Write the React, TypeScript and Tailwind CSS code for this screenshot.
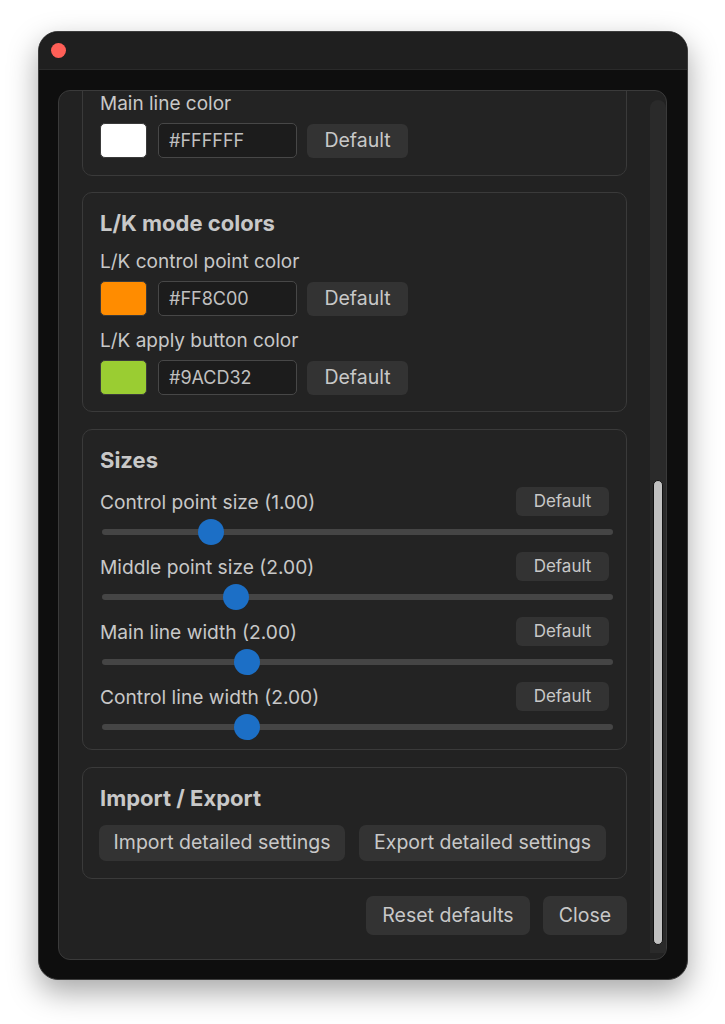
import React from "react";

const TXT = "text-[#c8c8c8]";

function ColorRow({ label, swatch, hex }: { label: string; swatch: string; hex: string }) {
  return (
    <div className="flex flex-col">
      <div className={`text-[19px] leading-[22px] ${TXT}`}>{label}</div>
      <div className="mt-[8px] flex items-center h-[35px]">
        <div className={`w-[47px] h-[35px] rounded-[5px] border border-[#3a3a3a] ${swatch}`} />
        <div className="ml-[11px] w-[139px] h-[35px] rounded-[5px] border border-[#474747] bg-[#1c1c1c] flex items-center px-[10px] text-[18px] text-[#c0c0c0]">
          {hex}
        </div>
        <button className={`ml-[10px] w-[101px] h-[34px] rounded-[6px] bg-[#333333] text-[19.5px] ${TXT}`}>Default</button>
      </div>
    </div>
  );
}

function SizeRow({ label, pos }: { label: string; pos: number }) {
  return (
    <div className="flex flex-col">
      <div className="flex items-center justify-between h-[29px]">
        <span className={`text-[19.2px] leading-[22px] ${TXT}`}>{label}</span>
        <button className={`w-[93px] h-[29px] rounded-[6px] bg-[#333333] text-[17px] ${TXT}`}>Default</button>
      </div>
      <div className="relative mt-[3px] h-[26px] ml-[2px] mr-[-4px]">
        <div className="absolute left-0 right-0 top-[10px] h-[6px] rounded-full bg-[#454545]" />
        <div className="absolute top-0 w-[26px] h-[26px] rounded-full bg-[#1c6fc6]" style={{ left: pos }} />
      </div>
    </div>
  );
}

function Section({ children, className = "" }: { children: React.ReactNode; className?: string }) {
  return (
    <div className={`rounded-[10px] border border-[#3a3a3a] bg-[#232323] px-[17px] pt-[18px] ${className}`}>{children}</div>
  );
}

function Header({ children }: { children: React.ReactNode }) {
  return <div className={`text-[22px] leading-[24px] font-bold ${TXT}`}>{children}</div>;
}

export default function App() {
  return (
    <div className="min-h-[1024px] bg-white pt-[31px] pl-[38px] [font-family:Inter,'Noto_Sans',sans-serif]">
      <div className="w-[650px] h-[949px] rounded-[20px] overflow-hidden border border-[#3c3c3c] bg-[#0e0e0e] shadow-[0_12px_30px_rgba(0,0,0,0.35)] flex flex-col">
        {/* title bar */}
        <div className="h-[38px] bg-[#1f1f1f] border-b border-[#2a2a2a] flex items-center pl-[12px] shrink-0">
          <div className="w-[15px] h-[15px] rounded-full bg-[#fe5f57]" />
        </div>
        {/* content */}
        <div className="flex-1 pt-[20px] pl-[19px] pr-[20px] pb-[19px] flex">
          <div className="flex-1 rounded-[12px] border border-[#3a3a3a] bg-[#222222] flex overflow-hidden">
            <div className="flex-1 overflow-hidden pl-[23px] pr-[23px]">
              <div className="flex flex-col gap-[16px] mt-[-18px]">
                <Section className="pb-[17px] pt-[19px]">
                  <ColorRow label="Main line color" swatch="bg-white" hex="#FFFFFF" />
                </Section>
                <Section className="pb-[16px]">
                  <Header>L/K mode colors</Header>
                  <div className="mt-[16px] flex flex-col gap-[14px]">
                    <ColorRow label="L/K control point color" swatch="bg-[#FF8C00]" hex="#FF8C00" />
                    <ColorRow label="L/K apply button color" swatch="bg-[#9ACD32]" hex="#9ACD32" />
                  </div>
                </Section>
                <Section className="pb-[9px] mt-[1px]">
                  <Header>Sizes</Header>
                  <div className="mt-[15px] flex flex-col gap-[7px]">
                    <SizeRow label="Control point size (1.00)" pos={96} />
                    <SizeRow label="Middle point size (2.00)" pos={121} />
                    <SizeRow label="Main line width (2.00)" pos={132} />
                    <SizeRow label="Control line width (2.00)" pos={132} />
                  </div>
                </Section>
                <Section className="pb-[17px] mt-[1px]">
                  <Header>Import / Export</Header>
                  <div className="mt-[15px] flex gap-[14px] ml-[-1px]">
                    <button className={`w-[246px] h-[36px] rounded-[7px] bg-[#333333] text-[19.5px] ${TXT}`}>Import detailed settings</button>
                    <button className={`w-[247px] h-[36px] rounded-[7px] bg-[#333333] text-[19.5px] ${TXT}`}>Export detailed settings</button>
                  </div>
                </Section>
                <div className="flex justify-end gap-[13px] mt-[1px]">
                  <button className={`w-[164px] h-[39px] rounded-[7px] bg-[#333333] text-[19.5px] ${TXT}`}>Reset defaults</button>
                  <button className={`w-[84px] h-[39px] rounded-[7px] bg-[#333333] text-[19.5px] ${TXT}`}>Close</button>
                </div>
              </div>
            </div>
            {/* scrollbar */}
            <div className="w-[16px] mt-[9px] mb-[6px] rounded-t-full bg-[#2a2a2a] flex flex-col">
              <div className="h-[380px]" />
              <div className="ml-[3px] w-[10px] flex-1 mb-[8px] rounded-full bg-[#c2c2c2] border border-[#111111]" />
            </div>
          </div>
        </div>
      </div>
    </div>
  );
}
